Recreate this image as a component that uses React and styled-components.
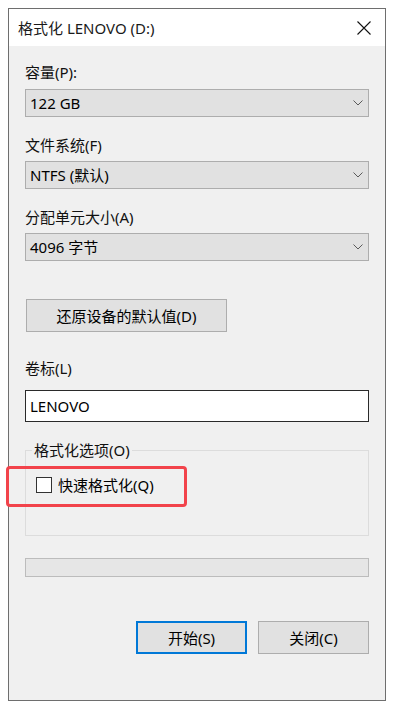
import React from "react";
import styled, { createGlobalStyle } from "styled-components";

const Global = createGlobalStyle`
  html, body { margin: 0; padding: 0; background: #ffffff; }
  body { padding: 8px; }
  * { box-sizing: border-box; }
`;

const FONT = `"Noto Sans", "Noto Sans CJK SC", sans-serif`;

const Dialog = styled.div`
  width: 378px;
  height: 693px;
  border: 1px solid #6e6e6e;
  background: #f0f0f0;
  font-family: ${FONT};
  font-size: 15px;
  color: #000;
  display: flex;
  flex-direction: column;
`;

const TitleBar = styled.div`
  height: 37px;
  background: #ffffff;
  display: flex;
  align-items: center;
  justify-content: space-between;
  padding: 0 14px 0 9px;
  flex-shrink: 0;
`;

const Title = styled.span`
  font-size: 15px;
  line-height: 20px;
  color: #1a1a1a;
`;

const Body = styled.div`
  flex: 1;
  display: flex;
  flex-direction: column;
  padding: 16px 16px 0 16px;
`;

const Label = styled.div`
  line-height: 20px;
  height: 20px;
  margin-top: ${(p) => p.$mt || 0}px;
  color: #111;
`;

const Select = styled.div`
  height: 28px;
  margin-top: ${(p) => p.$mt || 0}px;
  background: #e1e1e1;
  border: 1px solid #adadad;
  display: flex;
  align-items: center;
  justify-content: space-between;
  padding: 0 5px 0 4px;
  line-height: 20px;
`;

const PlainButton = styled.div`
  height: 33px;
  background: #e1e1e1;
  border: ${(p) => (p.$default ? "2px solid #0078d7" : "1px solid #adadad")};
  display: flex;
  align-items: center;
  justify-content: center;
  line-height: 20px;
`;

const ResetButton = styled(PlainButton)`
  width: 201px;
  margin-top: 38px;
  margin-left: 1px;
`;

const TextInput = styled.div`
  height: 32px;
  margin-top: 12px;
  background: #ffffff;
  border: 1px solid #2a2a2a;
  display: flex;
  align-items: center;
  padding: 0 4px;
  line-height: 20px;
`;

const Group = styled.fieldset`
  margin: 18px 0 0 0;
  padding: 0 6px 40px 6px;
  border: 1px solid #dcdcdc;
  min-width: 0;
`;

const Legend = styled.legend`
  padding: 0 2px;
  line-height: 20px;
  color: #111;
`;

const CheckRow = styled.div`
  position: relative;
  margin-top: 14px;
  margin-left: 4px;
  display: flex;
  align-items: center;
  gap: 6px;
  height: 21px;
  line-height: 20px;
`;

const Box = styled.span`
  width: 16px;
  height: 16px;
  background: #ffffff;
  border: 1px solid #333333;
  flex-shrink: 0;
`;

const Highlight = styled.div`
  position: absolute;
  left: -30px;
  top: -8px;
  width: 181px;
  height: 41px;
  border: 3px solid #f2434b;
  border-radius: 4px;
  pointer-events: none;
`;

const Progress = styled.div`
  height: 19px;
  margin-top: 22px;
  background: #e6e6e6;
  border: 1px solid #bcbcbc;
`;

const ButtonRow = styled.div`
  margin-top: 44px;
  display: flex;
  justify-content: flex-end;
  gap: 11px;
`;

const ActionButton = styled(PlainButton)`
  width: 111px;
`;

const Chevron = () => (
  <svg width="10" height="6" viewBox="0 0 10 6">
    <polyline points="0.5,0.5 5,5 9.5,0.5" fill="none" stroke="#5a5a5a" strokeWidth="1" />
  </svg>
);

const CloseIcon = () => (
  <svg width="14" height="14" viewBox="0 0 14 14">
    <path d="M0.5 0.5 L13.5 13.5 M13.5 0.5 L0.5 13.5" stroke="#111" strokeWidth="1.1" fill="none" />
  </svg>
);

export default function App() {
  return (
    <>
      <Global />
      <Dialog>
        <TitleBar>
          <Title>格式化 LENOVO (D:)</Title>
          <CloseIcon />
        </TitleBar>
        <Body>
          <Label>容量(P):</Label>
          <Select $mt={7}>
            <span>122 GB</span>
            <Chevron />
          </Select>
          <Label $mt={18}>文件系统(F)</Label>
          <Select $mt={6}>
            <span>NTFS (默认)</span>
            <Chevron />
          </Select>
          <Label $mt={18}>分配单元大小(A)</Label>
          <Select $mt={6}>
            <span>4096 字节</span>
            <Chevron />
          </Select>
          <ResetButton>还原设备的默认值(D)</ResetButton>
          <Label $mt={26}>卷标(L)</Label>
          <TextInput>LENOVO</TextInput>
          <Group>
            <Legend>格式化选项(O)</Legend>
            <CheckRow>
              <Box />
              <span>快速格式化(Q)</span>
              <Highlight />
            </CheckRow>
          </Group>
          <Progress />
          <ButtonRow>
            <ActionButton $default>开始(S)</ActionButton>
            <ActionButton>关闭(C)</ActionButton>
          </ButtonRow>
        </Body>
      </Dialog>
    </>
  );
}
